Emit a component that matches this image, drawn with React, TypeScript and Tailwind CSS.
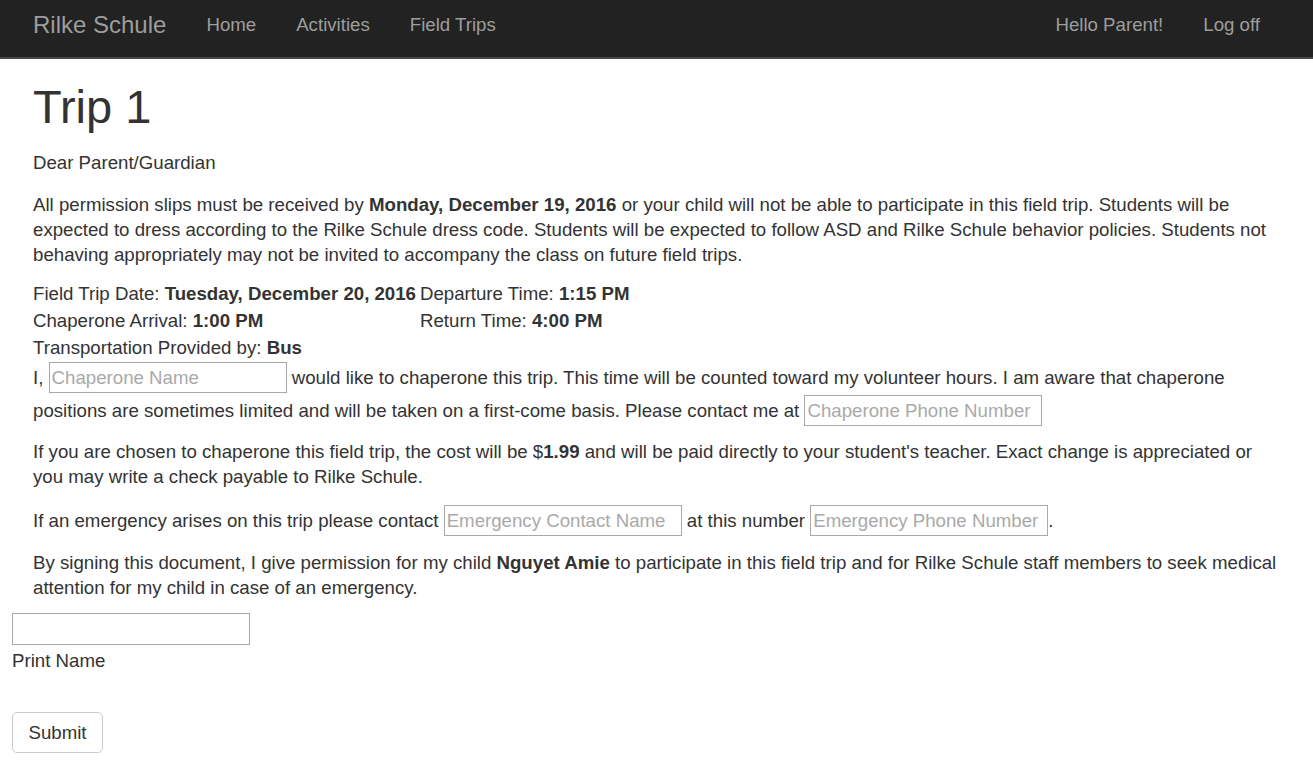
import React from "react";

const inputCls =
  "my-[1px] h-[31px] w-[238px] border border-[#a9a9a9] bg-white px-[2px] text-[18.67px] text-[#333] placeholder:text-[#a9a9a9] outline-none align-baseline";

export default function App() {
  return (
    <div className="min-h-screen bg-white font-['Liberation_Sans',Arial,sans-serif] text-[18.67px] leading-[25px] text-[#333]">
      {/* Top navbar */}
      <nav className="flex h-[59px] items-start justify-between border-b-2 border-[#474747] bg-[#222] px-[13px] text-[#9d9d9d]">
        <div className="flex h-[48px] items-center">
          <span className="px-[20px] text-[24px]">Rilke Schule</span>
          <a className="px-[20px]">Home</a>
          <a className="px-[20px]">Activities</a>
          <a className="px-[20px]">Field Trips</a>
        </div>
        <div className="flex h-[48px] items-center pr-[20px]">
          <a className="px-[20px]">Hello Parent!</a>
          <a className="px-[20px]">Log off</a>
        </div>
      </nav>

      <div className="px-[12px]">
        <div className="px-[21px]">
          <h1 className="mt-[21px] mb-[17px] text-[47px] leading-[53px] font-normal">Trip 1</h1>
          <p className="mb-[17px]">Dear Parent/Guardian</p>
          <p className="mb-[13px]">
            All permission slips must be received by <b>Monday, December 19, 2016</b> or your child will not be able to
            participate in this field trip. Students will be expected to dress according to the Rilke Schule dress code.
            Students will be expected to follow ASD and Rilke Schule behavior policies. Students not behaving
            appropriately may not be invited to accompany the class on future field trips.
          </p>

          <table className="border-collapse">
            <tbody>
              <tr>
                <td className="py-[1px] pr-[4px]">
                  Field Trip Date: <b>Tuesday, December 20, 2016</b>
                </td>
                <td className="py-[1px]">
                  Departure Time: <b>1:15 PM</b>
                </td>
              </tr>
              <tr>
                <td className="py-[1px] pr-[4px]">
                  Chaperone Arrival: <b>1:00 PM</b>
                </td>
                <td className="py-[1px]">
                  Return Time: <b>4:00 PM</b>
                </td>
              </tr>
              <tr>
                <td className="py-[1px] pr-[4px]" colSpan={2}>
                  Transportation Provided by: <b>Bus</b>
                </td>
              </tr>
            </tbody>
          </table>

          <p className="mb-[12px]">
            I, <input className={inputCls} placeholder="Chaperone Name" /> would like to chaperone this trip. This time
            will be counted toward my volunteer hours. I am aware that chaperone positions are sometimes limited and will
            be taken on a first-come basis. Please contact me at{" "}
            <input className={inputCls} placeholder="Chaperone Phone Number" />
          </p>

          <p className="mb-[15px]">
            If you are chosen to chaperone this field trip, the cost will be $<b>1.99</b> and will be paid directly to
            your student's teacher. Exact change is appreciated or you may write a check payable to Rilke Schule.
          </p>

          <p className="mb-[13px]">
            If an emergency arises on this trip please contact{" "}
            <input className={inputCls} placeholder="Emergency Contact Name" /> at this number{" "}
            <input className={inputCls} placeholder="Emergency Phone Number" />.
          </p>

          <p className="mb-[13px]">
            By signing this document, I give permission for my child <b>Nguyet Amie</b> to participate in this field
            trip and for Rilke Schule staff members to seek medical attention for my child in case of an emergency.
          </p>
        </div>

        <div className="flex flex-col items-start">
          <input className="h-[32px] w-[238px] border border-[#a9a9a9] bg-white px-[2px] outline-none" />
          <label className="mt-[3px]">Print Name</label>
        </div>

        <button className="mt-[39px] h-[41px] w-[91px] rounded-[5px] border border-[#ccc] bg-white text-[#333]">
          Submit
        </button>
      </div>
    </div>
  );
}
